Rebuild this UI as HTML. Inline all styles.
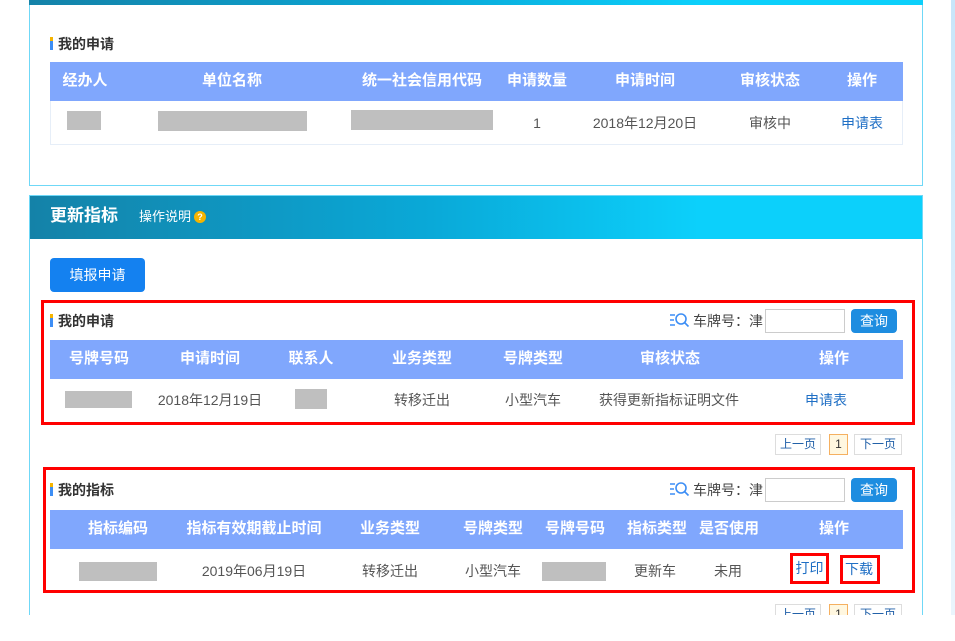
<!DOCTYPE html>
<html><head><meta charset="utf-8">
<style>
*{margin:0;padding:0;box-sizing:border-box}
body{width:955px;height:641px;position:relative;overflow:hidden;background:#fff;font-family:"Liberation Sans","Noto Sans CJK SC","WenQuanYi Zen Hei",sans-serif;font-size:13px;color:#555}
.a{position:absolute}
.panel{position:absolute;left:29px;width:894px;border:1px solid #6fd8f7}
.grad{background:linear-gradient(90deg,#1482a8 0%,#0aa9d8 45%,#0cd0fb 75%,#0cd0fb 100%)}
.ttl{position:absolute;font-size:14px;font-weight:bold;color:#333;padding-left:8px;line-height:16px}
.ttl:before{content:"";position:absolute;left:0;top:1px;width:3px;height:13px;background:linear-gradient(#f5b400 0,#f5b400 30%,#3d8ef5 30%)}
.th{position:absolute;left:50px;width:853px;height:39px;background:#80a7fd}
.tr{position:absolute;left:50px;width:853px;border:1px solid #e6eef8;border-top:none;background:#fff}
.h{position:absolute;color:#fff;font-weight:bold;font-size:15px;line-height:18px;transform:translateX(-50%);white-space:nowrap}
.c{position:absolute;transform:translateX(-50%);white-space:nowrap;color:#555;font-size:14px;line-height:16px}
.g{position:absolute;background:#bfbfbf}
.lnk{color:#1f6fc5}
.red{position:absolute;border:3px solid #f00}
.btn{position:absolute;background:#1e8de0;color:#fff;border-radius:4px;text-align:center;font-size:14px}
.inp{position:absolute;border:1px solid #ccc;background:#fff;width:80px;height:24px}
.pg{position:absolute;border:1px solid #ddd;color:#1f5fa8;font-size:12px;text-align:center;height:21px;line-height:19px}
</style></head><body>
<div class="a" style="left:951px;top:0;width:4px;height:615px;background:linear-gradient(#c8e6fa,#eaf5fd)"></div>

<div class="panel" style="top:-1px;height:187px"></div>
<div class="a grad" style="left:29px;top:0;width:894px;height:5px"></div>
<div class="ttl" style="left:50px;top:36px">我的申请</div>
<div class="th" style="top:62px"></div>
<div class="h" style="left:85px;top:72px">经办人</div>
<div class="h" style="left:232px;top:72px">单位名称</div>
<div class="h" style="left:422px;top:72px">统一社会信用代码</div>
<div class="h" style="left:537px;top:72px">申请数量</div>
<div class="h" style="left:645px;top:72px">申请时间</div>
<div class="h" style="left:770px;top:72px">审核状态</div>
<div class="h" style="left:862px;top:72px">操作</div>
<div class="tr" style="top:101px;height:44px"></div>
<div class="g" style="left:67px;top:111px;width:34px;height:19px"></div>
<div class="g" style="left:158px;top:111px;width:149px;height:20px"></div>
<div class="g" style="left:351px;top:110px;width:142px;height:20px"></div>
<div class="c" style="left:537px;top:115px">1</div>
<div class="c" style="left:645px;top:115px">2018年12月20日</div>
<div class="c" style="left:770px;top:115px">审核中</div>
<div class="c lnk" style="left:862px;top:115px">申请表</div>

<div class="panel" style="top:195px;height:430px"></div>
<div class="a grad" style="left:30px;top:196px;width:892px;height:43px"></div>
<div class="a" style="left:50px;top:206px;color:#fff;font-size:17px;font-weight:bold;line-height:20px">更新指标</div>
<div class="a" style="left:139px;top:209px;color:#fff;font-size:13px;line-height:16px">操作说明</div>
<div class="a" style="left:194px;top:211px;width:12px;height:12px;border-radius:50%;background:#f5b400;color:#fff;font-size:9px;font-weight:bold;text-align:center;line-height:12px">?</div>
<div class="btn" style="left:50px;top:258px;width:95px;height:34px;line-height:34px;background:#1481f0">填报申请</div>

<div class="red" style="left:41px;top:300px;width:874px;height:125px"></div>
<div class="ttl" style="left:50px;top:313px">我的申请</div>
<svg class="a" style="left:669px;top:312px" width="21" height="16" viewBox="0 0 21 16"><g stroke="#3d8ef5" stroke-width="1.6" fill="none"><path d="M1 3h5M1 8h4M1 13h5"/><circle cx="12" cy="7" r="5"/><path d="M15.5 10.5l4 4"/></g></svg>
<div class="a" style="left:693px;top:313px;color:#444;font-size:14px;line-height:16px">车牌号：津</div>
<div class="inp" style="left:765px;top:309px"></div>
<div class="btn" style="left:851px;top:309px;width:46px;height:24px;line-height:24px">查询</div>
<div class="th" style="top:340px"></div>
<div class="h" style="left:99px;top:350px">号牌号码</div>
<div class="h" style="left:210px;top:350px">申请时间</div>
<div class="h" style="left:311px;top:350px">联系人</div>
<div class="h" style="left:422px;top:350px">业务类型</div>
<div class="h" style="left:533px;top:350px">号牌类型</div>
<div class="h" style="left:670px;top:350px">审核状态</div>
<div class="h" style="left:834px;top:350px">操作</div>
<div class="g" style="left:65px;top:391px;width:67px;height:17px"></div>
<div class="g" style="left:295px;top:389px;width:32px;height:20px"></div>
<div class="c" style="left:210px;top:392px">2018年12月19日</div>
<div class="c" style="left:422px;top:392px">转移迁出</div>
<div class="c" style="left:533px;top:392px">小型汽车</div>
<div class="c" style="left:669px;top:392px">获得更新指标证明文件</div>
<div class="c lnk" style="left:826px;top:392px">申请表</div>
<div class="pg" style="left:775px;top:434px;width:46px">上一页</div>
<div class="pg" style="left:829px;top:434px;width:19px;border-color:#f5b060;background:#fff7e0;color:#333">1</div>
<div class="pg" style="left:854px;top:434px;width:48px">下一页</div>

<div class="red" style="left:43px;top:467px;width:872px;height:126px"></div>
<div class="ttl" style="left:50px;top:482px">我的指标</div>
<svg class="a" style="left:669px;top:481px" width="21" height="16" viewBox="0 0 21 16"><g stroke="#3d8ef5" stroke-width="1.6" fill="none"><path d="M1 3h5M1 8h4M1 13h5"/><circle cx="12" cy="7" r="5"/><path d="M15.5 10.5l4 4"/></g></svg>
<div class="a" style="left:693px;top:482px;color:#444;font-size:14px;line-height:16px">车牌号：津</div>
<div class="inp" style="left:765px;top:478px"></div>
<div class="btn" style="left:851px;top:478px;width:46px;height:24px;line-height:24px">查询</div>
<div class="th" style="top:510px"></div>
<div class="h" style="left:118px;top:520px">指标编码</div>
<div class="h" style="left:254px;top:520px">指标有效期截止时间</div>
<div class="h" style="left:390px;top:520px">业务类型</div>
<div class="h" style="left:493px;top:520px">号牌类型</div>
<div class="h" style="left:575px;top:520px">号牌号码</div>
<div class="h" style="left:657px;top:520px">指标类型</div>
<div class="h" style="left:729px;top:520px">是否使用</div>
<div class="h" style="left:834px;top:520px">操作</div>
<div class="g" style="left:79px;top:562px;width:78px;height:19px"></div>
<div class="g" style="left:542px;top:562px;width:64px;height:19px"></div>
<div class="c" style="left:254px;top:563px">2019年06月19日</div>
<div class="c" style="left:390px;top:563px">转移迁出</div>
<div class="c" style="left:493px;top:563px">小型汽车</div>
<div class="c" style="left:655px;top:563px">更新车</div>
<div class="c" style="left:728px;top:563px">未用</div>
<div class="a lnk" style="left:790px;top:553px;width:39px;height:31px;border:3px solid #f00;text-align:center;line-height:25px;font-size:14px">打印</div>
<div class="a lnk" style="left:840px;top:555px;width:40px;height:29px;border:3px solid #f00;text-align:left;padding-left:2px;line-height:23px;font-size:14px">下载</div>
<div class="pg" style="left:775px;top:604px;width:46px">上一页</div>
<div class="pg" style="left:829px;top:604px;width:19px;border-color:#f5b060;background:#fff7e0;color:#333">1</div>
<div class="pg" style="left:854px;top:604px;width:48px">下一页</div>

<div class="a" style="left:0;top:615px;width:955px;height:26px;background:#fff"></div>
</body></html>
